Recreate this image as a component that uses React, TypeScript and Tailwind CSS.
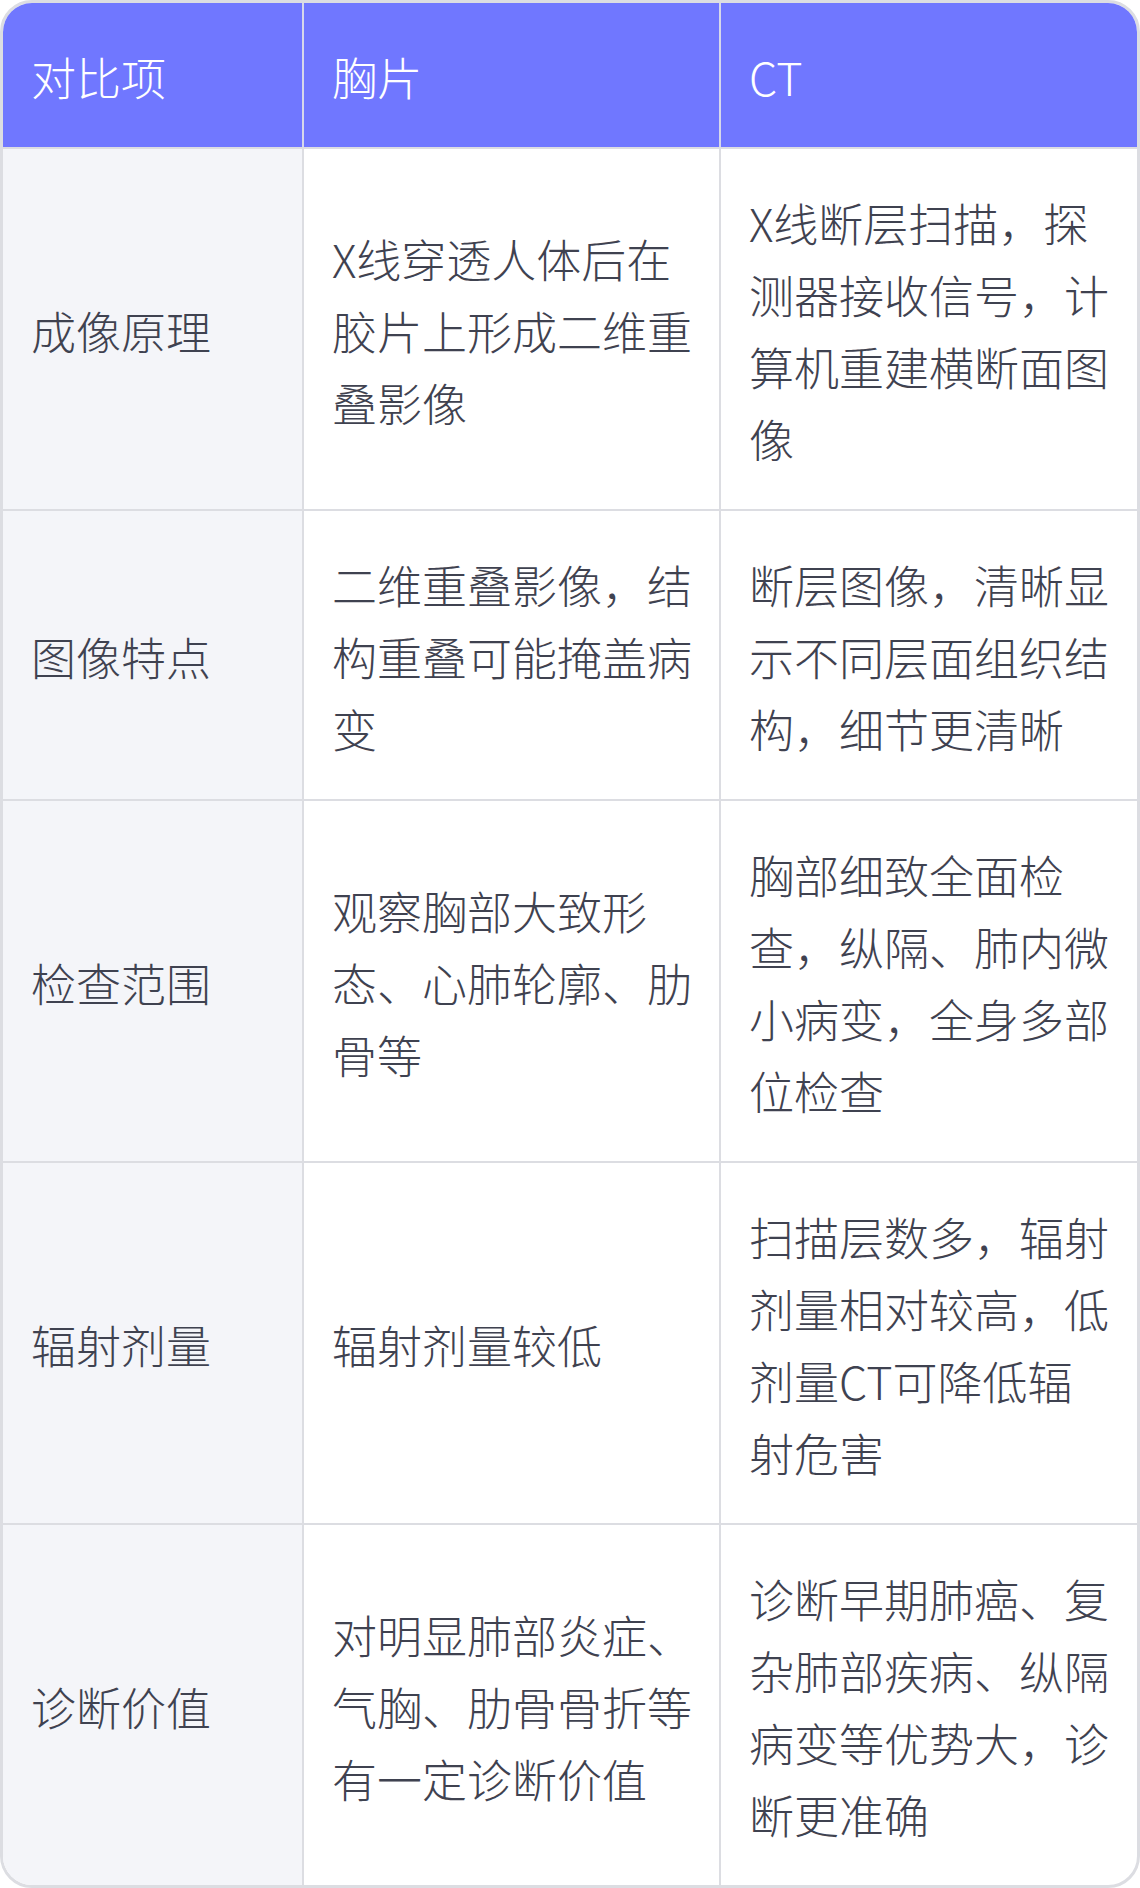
const rows: { item: string; xray: string; ct: string }[] = [
  {
    item: "成像原理",
    xray: "X线穿透人体后在胶片上形成二维重叠影像",
    ct: "X线断层扫描，探测器接收信号，计算机重建横断面图像",
  },
  {
    item: "图像特点",
    xray: "二维重叠影像，结构重叠可能掩盖病变",
    ct: "断层图像，清晰显示不同层面组织结构，细节更清晰",
  },
  {
    item: "检查范围",
    xray: "观察胸部大致形态、心肺轮廓、肋骨等",
    ct: "胸部细致全面检查，纵隔、肺内微小病变，全身多部位检查",
  },
  {
    item: "辐射剂量",
    xray: "辐射剂量较低",
    ct: "扫描层数多，辐射剂量相对较高，低剂量CT可降低辐射危害",
  },
  {
    item: "诊断价值",
    xray: "对明显肺部炎症、气胸、肋骨骨折等有一定诊断价值",
    ct: "诊断早期肺癌、复杂肺部疾病、纵隔病变等优势大，诊断更准确",
  },
];

export default function App() {
  return (
    <div
      className="w-[1140px] bg-white"
      style={{ fontFamily: '"Noto Sans CJK SC", "Noto Sans", sans-serif' }}
    >
      <div className="overflow-hidden rounded-[32px] border-[3px] border-[#dcdde2] text-[45px] font-light leading-[72px]">
        {/* header */}
        <div className="flex bg-[#7077ff] text-white">
          <div className="w-[301px] shrink-0 border-r-2 border-[#d6d8ea] px-[28px] pt-[38px] pb-[34px]">对比项</div>
          <div className="w-[417px] shrink-0 border-r-2 border-[#d6d8ea] pt-[38px] pb-[34px] pl-[28px] pr-[20px]">胸片</div>
          <div className="flex-1 pt-[38px] pb-[34px] pl-[28px] pr-[20px]">CT</div>
        </div>

        {rows.map((r) => (
          <div key={r.item} className="flex border-t-2 border-[#dcdde2] text-[#3f4250]">
            <div className="flex w-[301px] shrink-0 items-center border-r-2 border-[#dcdde2] bg-[#f4f5f9] px-[28px] pt-[38px] pb-[34px]">
              {r.item}
            </div>
            <div className="flex w-[417px] shrink-0 items-center border-r-2 border-[#dcdde2] pt-[38px] pb-[34px] pl-[28px] pr-[20px]">
              <p>{r.xray}</p>
            </div>
            <div className="flex flex-1 items-center pt-[38px] pb-[34px] pl-[28px] pr-[20px]">
              <p>{r.ct}</p>
            </div>
          </div>
        ))}
      </div>
    </div>
  );
}
